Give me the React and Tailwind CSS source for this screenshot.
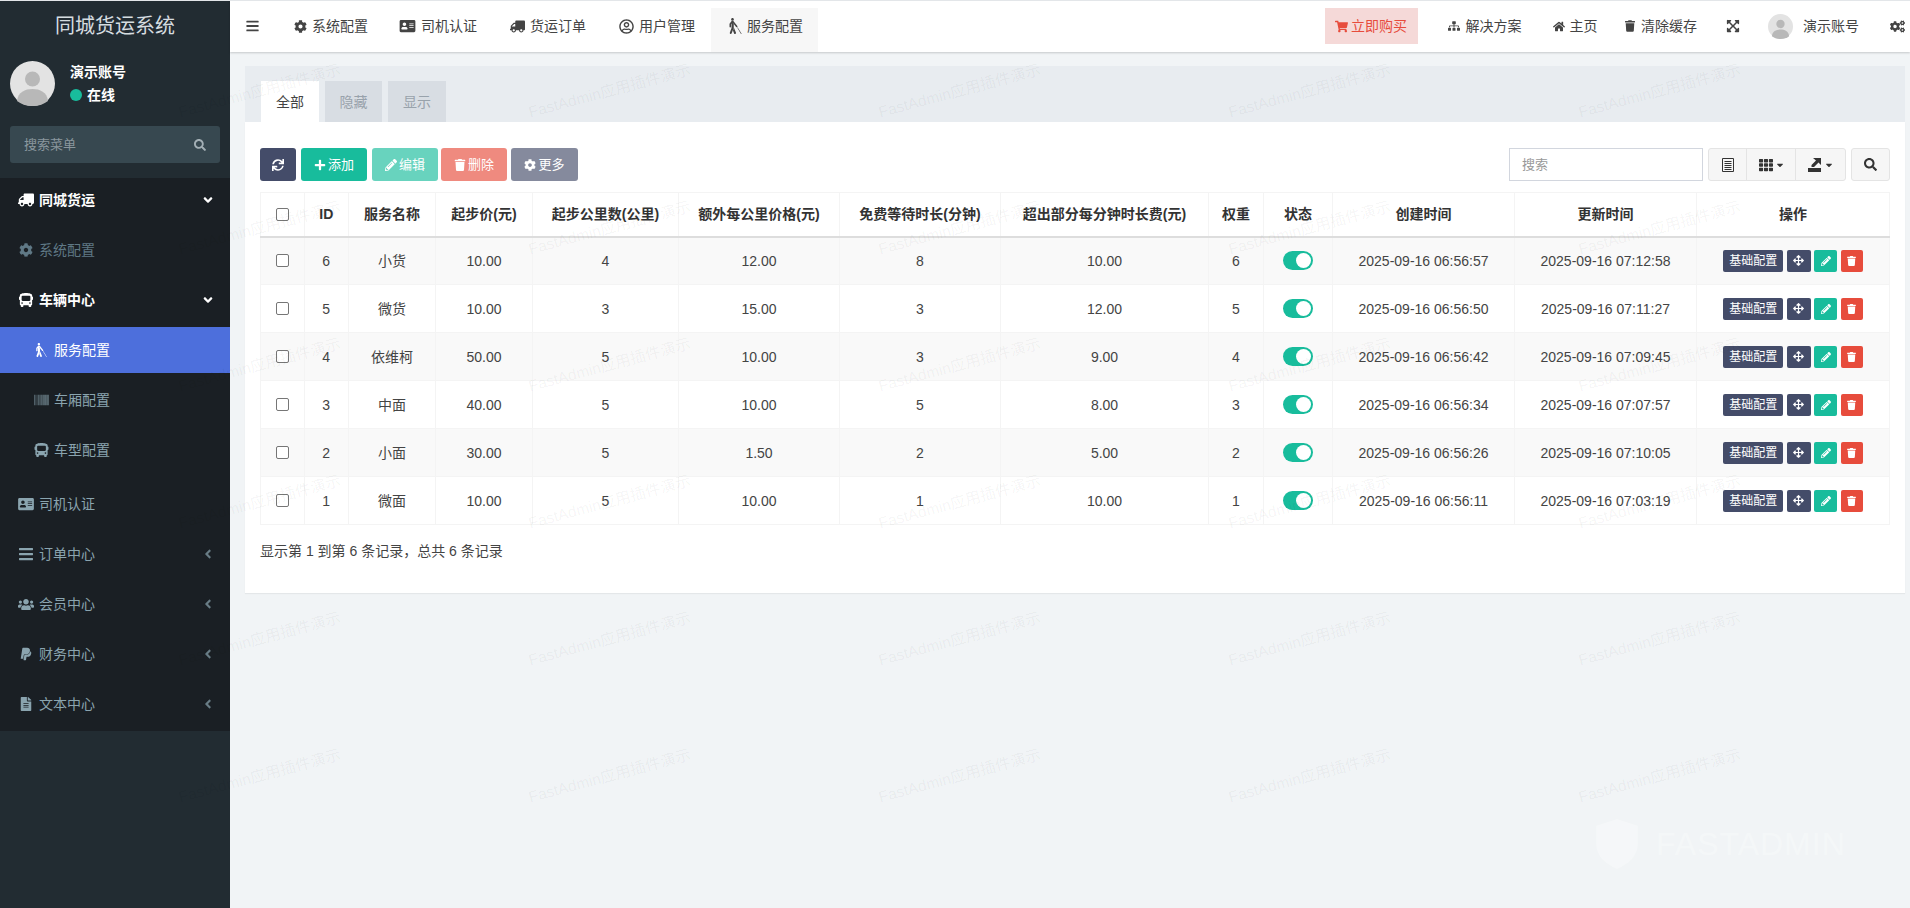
import { FaAddressCard, FaAngleDown, FaAngleLeft, FaArrowsAlt, FaBarcode, FaBars, FaBlind, FaBus, FaCaretDown, FaCog, FaCogs, FaExpandArrowsAlt, FaFileAlt, FaHome, FaPaypal, FaPencilAlt, FaPlus, FaRegUserCircle, FaSearch, FaShoppingCart, FaSitemap, FaSync, FaTh, FaTrash, FaTruck, FaUsers } from "react-icons/fa";

const rows = [
  { id: 6, name: "小货", start: "10.00", km: 4, extra: "12.00", wait: 8, over: "10.00", weight: 6, created: "2025-09-16 06:56:57", updated: "2025-09-16 07:12:58" },
  { id: 5, name: "微货", start: "10.00", km: 3, extra: "15.00", wait: 3, over: "12.00", weight: 5, created: "2025-09-16 06:56:50", updated: "2025-09-16 07:11:27" },
  { id: 4, name: "依维柯", start: "50.00", km: 5, extra: "10.00", wait: 3, over: "9.00", weight: 4, created: "2025-09-16 06:56:42", updated: "2025-09-16 07:09:45" },
  { id: 3, name: "中面", start: "40.00", km: 5, extra: "10.00", wait: 5, over: "8.00", weight: 3, created: "2025-09-16 06:56:34", updated: "2025-09-16 07:07:57" },
  { id: 2, name: "小面", start: "30.00", km: 5, extra: "1.50", wait: 2, over: "5.00", weight: 2, created: "2025-09-16 06:56:26", updated: "2025-09-16 07:10:05" },
  { id: 1, name: "微面", start: "10.00", km: 5, extra: "10.00", wait: 1, over: "10.00", weight: 1, created: "2025-09-16 06:56:11", updated: "2025-09-16 07:03:19" },
];

const columns = [
  { label: "ID", cls: "w-[44.5px]" },
  { label: "服务名称", cls: "w-[87px]" },
  { label: "起步价(元)", cls: "w-[97px]" },
  { label: "起步公里数(公里)", cls: "w-[146px]" },
  { label: "额外每公里价格(元)", cls: "w-[161px]" },
  { label: "免费等待时长(分钟)", cls: "w-[161px]" },
  { label: "超出部分每分钟时长费(元)", cls: "w-[208px]" },
  { label: "权重", cls: "w-[55px]" },
  { label: "状态", cls: "w-[69px]" },
  { label: "创建时间", cls: "w-[182px]" },
  { label: "更新时间", cls: "w-[182px]" },
  { label: "操作", cls: "w-[193px]" },
];

function Avatar({ className }) {
  return (
    <svg viewBox="0 0 45 45" className={className}>
      <circle cx="22.5" cy="22.5" r="22.5" fill="#e3e3e3" />
      <circle cx="22.5" cy="18" r="7.5" fill="#b8b8b8" />
      <path d="M7 40c1-9 8-12 15.500-12S37 31 38 40c-4 3-9 5-15.500 5S11 43 7 40z" fill="#b8b8b8" />
    </svg>
  );
}

function MenuItem({ icon: Icon, label, arrow, strong, dim, iconCls, className }) {
  const color = strong ? "text-white font-semibold" : dim ? "text-[#5f7885]" : "text-[#8aa4af]";
  return (
    <div className={`flex items-center pl-[18px] pr-[16px] text-sm ${color} ${className || "h-[50px]"}`}>
      <Icon className={iconCls || "w-[16px] h-[14px] shrink-0"} />
      <span className="ml-[5px]">{label}</span>
      {arrow === "down" && <FaAngleDown className="ml-auto w-[12px] h-[14px] text-white" />}
      {arrow === "left" && <FaAngleLeft className="ml-auto w-[12px] h-[14px] opacity-70" />}
    </div>
  );
}

function SubItem({ icon: Icon, label, active }) {
  return (
    <div className={`flex items-center pl-[34px] text-sm ${active ? "h-[46px] my-[2px] bg-[#4d6fdc] text-white" : "h-[50px] text-[#8aa4af]"}`}>
      <Icon className="w-[15px] h-[14px] shrink-0" />
      <span className="ml-[5px]">{label}</span>
    </div>
  );
}

function Sidebar() {
  return (
    <aside className="w-[230px] shrink-0 bg-[#222c32] flex flex-col">
      <div className="h-[177px] shrink-0 flex flex-col">
        <div className="h-[50px] flex items-center justify-center text-xl text-[#d6dde0]">同城货运系统</div>
        <div className="flex items-center pl-[10px] mt-[10px]">
          <Avatar className="w-[45px] h-[45px]" />
          <div className="ml-[15px] text-sm font-semibold text-white">
            <div>演示账号</div>
            <div className="flex items-center mt-[3px]">
              <span className="w-[12px] h-[12px] rounded-full bg-[#18bc9c]" />
              <span className="ml-[5px]">在线</span>
            </div>
          </div>
        </div>
        <div className="mx-[10px] mt-[20px] h-[37px] rounded-[3px] bg-[#374850] flex items-center px-[14px] text-[13px] text-[#8a979e]">
          <span>搜索菜单</span>
          <FaSearch className="ml-auto w-[12px] h-[12px] text-[#a3afb5]" />
        </div>
      </div>
      <nav className="bg-[#1a1f24] pb-[2px]">
        <MenuItem icon={FaTruck} label="同城货运" arrow="down" strong iconCls="w-[16px] h-[14px] shrink-0 -scale-x-100" className="h-[47px] pb-[3px]" />
        <MenuItem icon={FaCog} label="系统配置" dim />
        <MenuItem icon={FaBus} label="车辆中心" arrow="down" strong />
        <SubItem icon={FaBlind} label="服务配置" active />
        <SubItem icon={FaBarcode} label="车厢配置" />
        <SubItem icon={FaBus} label="车型配置" />
        <div className="h-[4px]" />
        <MenuItem icon={FaAddressCard} label="司机认证" />
        <MenuItem icon={FaBars} label="订单中心" arrow="left" iconCls="w-[16px] h-[16px] shrink-0" />
        <MenuItem icon={FaUsers} label="会员中心" arrow="left" iconCls="w-[16px] h-[15px] shrink-0" />
        <MenuItem icon={FaPaypal} label="财务中心" arrow="left" />
        <MenuItem icon={FaFileAlt} label="文本中心" arrow="left" />
      </nav>
    </aside>
  );
}

function TopTab({ icon: Icon, label, active, iconCls, className }) {
  return (
    <div className={`flex items-center px-[15px] h-[44px] mt-[7px] pb-[8px] text-[#444] ${active ? "bg-[#f7f7f7]" : ""} ${className}`}>
      <Icon className={iconCls} />
      <span className="ml-[5px]">{label}</span>
    </div>
  );
}

function Topbar() {
  return (
    <header className="h-[51px] shrink-0 bg-white flex items-start text-sm text-[#444] shadow-[0_1px_2px_rgba(0,0,0,0.18)] relative">
      <div className="w-[45px] h-[50px] flex items-center justify-center">
        <FaBars className="w-[13px] h-[14px]" />
      </div>
      <TopTab icon={FaCog} label="系统配置" iconCls="w-[13px] h-[13px]" className="ml-[4px]" />
      <TopTab icon={FaAddressCard} label="司机认证" iconCls="w-[17px] h-[14px]" className="ml-[1px]" />
      <TopTab icon={FaTruck} label="货运订单" iconCls="w-[15px] h-[13px] -scale-x-100" className="ml-[3px]" />
      <TopTab icon={FaRegUserCircle} label="用户管理" iconCls="w-[15px] h-[15px]" className="ml-[3px]" />
      <TopTab icon={FaBlind} label="服务配置" active iconCls="w-[13px] h-[16px]" className="ml-[1px] w-[107px] pl-[18px]" />
      <div className="ml-auto flex items-center h-[50px] pr-[5px]">
        <div className="w-[93px] h-[36px] bg-[#f5d9d8] text-[#e74c3c] flex items-center justify-center">
          <FaShoppingCart className="w-[13px] h-[13px]" />
          <span className="ml-[3px]">立即购买</span>
        </div>
        <FaSitemap className="ml-[30px] w-[12px] h-[12px]" />
        <span className="ml-[6px]">解决方案</span>
        <FaHome className="ml-[31px] w-[12px] h-[11px]" />
        <span className="ml-[5px]">主页</span>
        <FaTrash className="ml-[27.5px] w-[10px] h-[12px]" />
        <span className="ml-[6px]">清除缓存</span>
        <FaExpandArrowsAlt className="ml-[29px] w-[14px] h-[14px]" />
        <Avatar className="ml-[28px] w-[25px] h-[25px]" />
        <span className="ml-[10px]">演示账号</span>
        <FaCogs className="ml-[31px] w-[15px] h-[13px]" />
      </div>
    </header>
  );
}

function ToolBtn({ bg, icon: Icon, label, faded, className }) {
  return (
    <div className={`h-[33px] rounded-[3px] flex items-center justify-center text-[13px] text-white ${bg} ${faded ? "opacity-65" : ""} ${className}`}>
      <Icon className="w-[12px] h-[12px]" />
      {label && <span className="ml-[2px]">{label}</span>}
    </div>
  );
}

function Toolbar() {
  return (
    <div className="flex items-center h-[33px]">
      <ToolBtn bg="bg-[#444c69]" icon={FaSync} className="w-[36px]" />
      <ToolBtn bg="bg-[#18bc9c]" icon={FaPlus} label="添加" className="w-[66px] ml-[5px]" />
      <ToolBtn bg="bg-[#18bc9c]" icon={FaPencilAlt} label="编辑" faded className="w-[66px] ml-[5px]" />
      <ToolBtn bg="bg-[#e74c3c]" icon={FaTrash} label="删除" faded className="w-[66px] ml-[3px]" />
      <ToolBtn bg="bg-[#444c69]" icon={FaCog} label="更多" faded className="w-[67px] ml-[4px]" />
      <div className="ml-auto flex items-center h-[33px]">
        <div className="w-[194px] h-[33px] border border-[#d2d6de] flex items-center px-[12px] text-[13px] text-[#999]">搜索</div>
        <div className="ml-[5px] flex h-[33px] rounded-[3px] border border-[#e4e4e4] bg-[#f6f6f6] text-[#333]">
          <div className="w-[37px] flex items-center justify-center">
            <svg viewBox="0 0 12 14" className="w-[12px] h-[14px]" fill="none" stroke="currentColor">
              <path d="M.5.5h11v13H.5z" />
              <path d="M2.500 3.500h7M2.500 5.500h7M2.500 7.500h7M2.500 9.500h7M2.500 11.500h7" />
            </svg>
          </div>
          <div className="w-[49px] flex items-center justify-center border-l border-[#e4e4e4]">
            <FaTh className="w-[14px] h-[14px]" />
            <FaCaretDown className="ml-[3px] w-[8px] h-[10px]" />
          </div>
          <div className="w-[50px] flex items-center justify-center border-l border-[#e4e4e4]">
            <svg viewBox="0 0 14 15" className="w-[14px] h-[15px]" fill="currentColor">
              <path d="M0 11h13v4H0z" />
              <path d="M5 1h8v7l-2.500-2.500L6 10H3.500V8L8 3.500z" />
            </svg>
            <FaCaretDown className="ml-[3px] w-[8px] h-[10px]" />
          </div>
        </div>
        <div className="ml-[5px] w-[39px] h-[33px] rounded-[3px] border border-[#e4e4e4] bg-[#f6f6f6] flex items-center justify-center text-[#333]">
          <FaSearch className="w-[13px] h-[13px]" />
        </div>
      </div>
    </div>
  );
}

function Switch() {
  return (
    <div className="mx-auto w-[30px] h-[19px] rounded-full bg-[#18bc9c] flex items-center justify-end pr-[2px]">
      <span className="w-[15px] h-[15px] rounded-full bg-white" />
    </div>
  );
}

function Actions() {
  return (
    <div className="flex items-center justify-center gap-[3.5px] text-white">
      <div className="w-[60px] h-[22px] rounded-[2px] bg-[#444c69] flex items-center justify-center text-xs">基础配置</div>
      <div className="w-[24px] h-[22px] rounded-[2px] bg-[#444c69] flex items-center justify-center"><FaArrowsAlt className="w-[11px] h-[11px]" /></div>
      <div className="w-[23px] h-[22px] rounded-[2px] bg-[#18bc9c] flex items-center justify-center"><FaPencilAlt className="w-[10px] h-[10px]" /></div>
      <div className="w-[22px] h-[22px] rounded-[2px] bg-[#e74c3c] flex items-center justify-center"><FaTrash className="w-[9px] h-[10px]" /></div>
    </div>
  );
}

function Check() {
  return <span className="block mx-auto w-[13px] h-[13px] rounded-[2px] border border-[#767676] bg-white" />;
}

function DataTable() {
  const th = "h-[44px] border border-[#f4f4f4] border-b-2 border-b-[#dddddd] font-bold text-[#333] text-sm text-center p-0";
  const td = "h-[48px] border border-[#f4f4f4] text-center text-sm text-[#444] p-0";
  return (
    <table className="table-fixed w-[1629px] border-collapse mt-[11px]">
      <thead>
        <tr>
          <th className={`${th} w-[43.5px]`}><Check /></th>
          {columns.map((c) => (
            <th key={c.label} className={`${th} ${c.cls}`}>{c.label}</th>
          ))}
        </tr>
      </thead>
      <tbody>
        {rows.map((r, i) => (
          <tr key={r.id} className={i % 2 === 0 ? "bg-[#f9f9f9]" : "bg-white"}>
            <td className={td}><Check /></td>
            <td className={td}>{r.id}</td>
            <td className={td}>{r.name}</td>
            <td className={td}>{r.start}</td>
            <td className={td}>{r.km}</td>
            <td className={td}>{r.extra}</td>
            <td className={td}>{r.wait}</td>
            <td className={td}>{r.over}</td>
            <td className={td}>{r.weight}</td>
            <td className={td}><Switch /></td>
            <td className={td}>{r.created}</td>
            <td className={td}>{r.updated}</td>
            <td className={td}><Actions /></td>
          </tr>
        ))}
      </tbody>
    </table>
  );
}

function Watermark() {
  const cells = Array.from({ length: 30 });
  return (
    <div className="absolute inset-0 overflow-hidden pointer-events-none grid grid-cols-[repeat(5,350px)] auto-rows-[137px] pl-[85px] pt-[21px]">
      {cells.map((_, i) => (
        <div key={i} className="flex items-center justify-center">
          <span className="-rotate-[15deg] whitespace-nowrap text-[15.5px] text-black/[0.05]">FastAdmin应用插件演示</span>
        </div>
      ))}
    </div>
  );
}

export default function App() {
  return (
    <div className="relative h-[908px] overflow-hidden flex border-t border-[#e3e6e9] bg-[#f1f4f6] font-['Liberation_Sans','Noto_Sans_CJK_SC',sans-serif]">
      <Sidebar />
      <div className="flex-1 flex flex-col min-w-0">
        <Topbar />
        <main className="pl-[15px] pr-[5px] pt-[14px]">
          <div className="h-[56px] bg-[#e8ecf0] flex items-end pl-[16px] gap-[6px] text-sm">
            <div className="w-[58px] h-[41px] bg-white text-[#444] flex items-center justify-center">全部</div>
            <div className="w-[57px] h-[41px] bg-[#d8dde3] text-[#98a2ab] flex items-center justify-center">隐藏</div>
            <div className="w-[58px] h-[41px] bg-[#d8dde3] text-[#98a2ab] flex items-center justify-center">显示</div>
          </div>
          <div className="h-[471px] bg-white pt-[26px] pl-[15px] pr-[15px] shadow-[0_1px_1px_rgba(0,0,0,0.05)]">
            <Toolbar />
            <DataTable />
            <div className="mt-[16px] text-sm text-[#444]">显示第 1 到第 6 条记录，总共 6 条记录</div>
          </div>
        </main>
      </div>
      <Watermark />
      {/* faint product mark, bottom right */}
      <div className="absolute left-[1592px] top-[818px] flex items-center text-white/30 pointer-events-none">
        <svg viewBox="0 0 50 60" className="w-[50px] h-[50px]" fill="currentColor">
          <path d="M25 0 50 8v22c0 14-11 24-25 30C11 54 0 44 0 30V8z" />
        </svg>
        <span className="ml-[14px] text-[32px] tracking-[1px]">FASTADMIN</span>
      </div>
    </div>
  );
}
